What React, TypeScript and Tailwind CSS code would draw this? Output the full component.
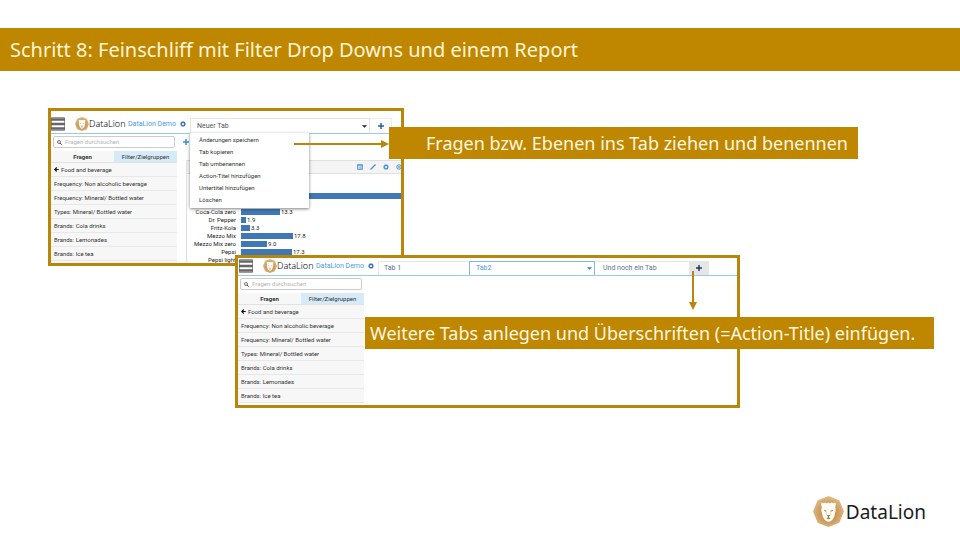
import React from "react";

const slideFont = "font-['Noto_Sans','Open_Sans',sans-serif]";
const appFont = "font-[Roboto,Arial,sans-serif]";

function LionMark({ className, id }: { className: string; id: string }) {
  return (
    <svg viewBox="0 0 30 30" className={className} aria-hidden="true">
      <defs>
        <radialGradient id={id} cx="0.5" cy="0.55" r="0.55">
          <stop offset="0" stopColor="#b9853f" />
          <stop offset="0.6" stopColor="#cfa063" />
          <stop offset="1" stopColor="#e3bd8a" />
        </radialGradient>
      </defs>
      <path d="M15 0 L25.500 4 L30 15 L25.500 26 L15 30 L4.500 26 L0 15 L4.500 4 Z" fill={`url(#${id})`} />
      <path
        d="M8 8.500 C7.300 6.800 9 5.800 10.400 7 L12 6.400 L13.500 7.200 L15 6.400 L16.500 7.200 L18 6.400 L19.600 7 C21 5.800 22.700 6.800 22 8.500 L21.500 11 L22 14 L21.200 17 L20.500 20 L18.800 23 L17 24.500 L15 25 L13 24.500 L11.200 23 L9.500 20 L8.800 17 L8 14 L8.500 11 Z"
        fill="#fffdf8"
      />
      <path d="M10.500 13.200 L13.200 14.300 L12.800 15.200 L11 14.600 Z M19.500 13.200 L16.800 14.300 L17.200 15.200 L19 14.600 Z" fill="#a87c42" />
      <path d="M13.200 18.500 H16.800 L15.300 20.300 L17 22 L15 22.600 L13 22 L14.700 20.300 Z" fill="#a87c42" />
      <path d="M13 15.500 L12.600 18.500 M17 15.500 L17.400 18.500" stroke="#e0c193" strokeWidth="0.600" fill="none" />
    </svg>
  );
}

function Gear({ className }: { className: string }) {
  return (
    <svg viewBox="0 0 16 16" className={className} aria-hidden="true">
      <circle cx="8" cy="8" r="4.500" fill="none" stroke="currentColor" strokeWidth="3" />
      <path
        d="M8 0.500 V3 M8 13 V15.500 M0.500 8 H3 M13 8 H15.500 M2.700 2.700 L4.400 4.400 M11.600 11.600 L13.300 13.300 M2.700 13.300 L4.400 11.600 M11.600 4.400 L13.300 2.700"
        stroke="currentColor"
        strokeWidth="3"
      />
    </svg>
  );
}

function Plus({ className }: { className: string }) {
  return (
    <svg viewBox="0 0 6 6" className={className} aria-hidden="true">
      <path d="M3 0 V6 M0 3 H6" stroke="currentColor" strokeWidth="1.500" />
    </svg>
  );
}

function Caret({ className }: { className: string }) {
  return (
    <svg viewBox="0 0 6 3" className={className} aria-hidden="true">
      <path d="M0 0 H6 L3 3 Z" fill="currentColor" />
    </svg>
  );
}

function AppBrand({ id }: { id: string }) {
  return (
    <div className="flex w-[139px] shrink-0 items-center pb-[2px]">
      <button aria-label="Menü" className="h-[14px] w-[14px] text-[#666]">
        <svg viewBox="0 0 14 14" className="h-[14px] w-[14px]" aria-hidden="true">
          <path d="M0.500 0.500 H13.500 V13.500 H0.500 Z" fill="#fff" stroke="#999" />
          <path d="M0 2.500 H14 M0 7 H14 M0 11.500 H14" stroke="currentColor" strokeWidth="2.600" />
        </svg>
      </button>
      <LionMark id={id} className="ml-[10px] h-[14px] w-[14px]" />
      <span className={`${slideFont} w-[39px] text-[9px] font-light leading-[14px] text-black`}>DataLion</span>
      <a href="#demo" className={`${appFont} whitespace-nowrap text-[7px] leading-[14px] text-[#4a9be0]`}>
        DataLion Demo
      </a>
      <button aria-label="Einstellungen" className="ml-auto mr-[4px] text-[#2f6fb5]">
        <Gear className="h-[6px] w-[6px]" />
      </button>
    </div>
  );
}

const questions = [
  "Frequency: Non alcoholic beverage",
  "Frequency: Mineral/ Bottled water",
  "Types: Mineral/ Bottled water",
  "Brands: Cola drinks",
  "Brands: Lemonades",
  "Brands: Ice tea",
];

function Sidebar() {
  return (
    <aside className={`${appFont} w-[126px] shrink-0 bg-[#f7f7f7] text-[6px] text-[#333]`}>
      <div className="bg-white px-[2px] pb-[3px] pt-[2px]">
        <label className="flex h-[12px] items-center gap-[3px] rounded-[2px] border border-[#ccc] bg-white px-[3px]">
          <svg viewBox="0 0 10 10" className="h-[5px] w-[5px] shrink-0" aria-hidden="true">
            <circle cx="4" cy="4" r="3" fill="none" stroke="#444" strokeWidth="1.500" />
            <path d="M6 6 L9.500 9.500" stroke="#444" strokeWidth="1.800" />
          </svg>
          <input
            type="search"
            aria-label="Fragen durchsuchen"
            placeholder="Fragen durchsuchen"
            className="min-w-0 flex-1 bg-transparent text-[6px] leading-[10px] outline-none placeholder:text-[#b5b5b5]"
          />
        </label>
      </div>
      <div role="tablist" className="grid h-[12px] grid-cols-2 border-b border-[#e2e2e2]">
        <button role="tab" className="font-bold leading-[11px]">Fragen</button>
        <button role="tab" className="bg-[#d6eaf8] leading-[11px]">Filter/Zielgruppen</button>
      </div>
      <ul>
        <li className="flex h-[14px] items-center gap-[2px] border-b border-[#e8e8e8] px-[3px]">
          <svg viewBox="0 0 10 10" className="h-[5px] w-[5px]" aria-hidden="true">
            <path d="M9.500 5 H2 M5.500 1 L1.500 5 L5.500 9" fill="none" stroke="#111" strokeWidth="2.200" />
          </svg>
          Food and beverage
        </li>
        {questions.map((q) => (
          <li key={q} className="flex h-[14px] items-center whitespace-nowrap border-b border-[#e8e8e8] px-[3px]">
            {q}
          </li>
        ))}
      </ul>
    </aside>
  );
}

const menuItems = [
  "Änderungen speichern",
  "Tab kopieren",
  "Tab umbenennen",
  "Action-Titel hinzufügen",
  "Untertitel hinzufügen",
  "Löschen",
];

const bars = [
  { label: "Coca-Cola zero", value: "13.3", width: 39 },
  { label: "Dr. Pepper", value: "1.9", width: 5 },
  { label: "Fritz-Kola", value: "3.3", width: 9 },
  { label: "Mezzo Mix", value: "17.8", width: 52 },
  { label: "Mezzo Mix zero", value: "9.0", width: 26 },
  { label: "Pepsi", value: "17.3", width: 51 },
  { label: "Pepsi light", value: "", width: 20 },
];

function ChartPanel() {
  return (
    <section className={`${appFont} ml-[9px] mt-[26px] min-w-0 flex-1 border-l border-[#e0e0e0] text-[6px] text-[#222]`}>
      <div className="flex h-[14px] items-center justify-end gap-[7px] overflow-hidden border-y border-[#e0e0e0] bg-[#f4f4f4] text-[#4292d8]">
        <svg viewBox="0 0 12 12" className="h-[6px] w-[6px] shrink-0" aria-hidden="true">
          <path d="M1 1 H11 V11 H1 Z M1 3 H11 M4 5 V11 M6 6 H10 M6 8.500 H10" fill="none" stroke="currentColor" strokeWidth="1.500" />
        </svg>
        <svg viewBox="0 0 12 12" className="h-[6px] w-[6px] shrink-0" aria-hidden="true">
          <path d="M1 11 L11 1" stroke="currentColor" strokeWidth="2.600" />
        </svg>
        <Gear className="h-[6px] w-[6px] shrink-0" />
        <svg viewBox="0 0 10 12" className="h-[6px] w-[5px] shrink-0" aria-hidden="true">
          <circle cx="6" cy="6" r="4.500" fill="none" stroke="currentColor" strokeWidth="1.800" />
          <path d="M3.500 6 H8.500 M6 3.500 V8.500" stroke="currentColor" strokeWidth="1.400" />
        </svg>
      </div>
      <div className="pt-[18px]">
        <div className="ml-[54px] flex h-[16px] items-start pt-[1px]">
          <span className="h-[6px] w-full bg-[#3f78b5]" />
        </div>
        {bars.map((b) => (
          <div key={b.label} className="flex h-[8px] items-center">
            <span className="w-[49px] shrink-0 whitespace-nowrap text-right leading-[8px]">{b.label}</span>
            <span className="ml-[5px] h-[6px] shrink-0 bg-[#3f78b5]" style={{ width: b.width }} />
            <span className="ml-[1px] leading-[8px]">{b.value}</span>
          </div>
        ))}
      </div>
    </section>
  );
}

function EditTabWindow() {
  return (
    <div className="absolute left-[48px] top-[37px] h-[158px] w-[356px] overflow-hidden border-[3px] border-[#b8860b] bg-white">
      <header className="flex h-[23px] items-end border-b border-[#9cc8ea]">
        <AppBrand id="lion-edit" />
        <button
          aria-haspopup="menu"
          aria-expanded="true"
          className={`${appFont} flex h-[15px] w-[180px] items-center justify-between border border-b-0 border-[#e4e4e4] pl-[6px] pr-[2px] text-[7px] text-[#555]`}
        >
          Neuer Tab
          <Caret className="h-[3px] w-[5px] text-[#222]" />
        </button>
        <button aria-label="Tab hinzufügen" className="flex h-[15px] w-[22px] items-center justify-center border-r border-t border-[#eee] text-[#2b5fa8]">
          <Plus className="h-[6px] w-[6px]" />
        </button>
      </header>
      <div className="flex">
        <Sidebar />
        <ChartPanel />
      </div>
      <button aria-label="Element hinzufügen" className="absolute left-[132px] top-[28px] text-[#3390dc]">
        <Plus className="h-[6px] w-[6px]" />
      </button>
      <ul
        role="menu"
        className={`${appFont} absolute left-[139px] top-[22px] w-[119px] bg-white pb-[2px] pt-[1px] text-[6px] text-[#333] shadow-[0_1px_3px_rgba(0,0,0,0.5)]`}
      >
        {menuItems.map((item) => (
          <li key={item} role="none">
            <button role="menuitem" className="block h-[12px] w-full px-[9px] text-left leading-[12px]">
              {item}
            </button>
          </li>
        ))}
      </ul>
    </div>
  );
}

function TabsWindow() {
  return (
    <div className="absolute left-[235px] top-[184px] h-[153px] w-[505px] overflow-hidden border-[3px] border-[#b8860b] bg-white">
      <header className={`${appFont} flex h-[18px] items-end border-b border-[#9cc8ea] pl-[1px] text-[7px] text-[#56729c]`}>
        <AppBrand id="lion-tabs" />
        <button className="h-[14px] w-[91px] border-l border-t border-[#e8e8e8] pl-[5px] text-left">Tab 1</button>
        <button
          aria-haspopup="menu"
          className="flex h-[14px] w-[126px] items-center justify-between border border-b-0 border-[#7fb9e6] pl-[6px] pr-[2px] text-[#4a9be0]"
        >
          Tab2
          <Caret className="h-[3px] w-[5px] text-[#2f7fc8]" />
        </button>
        <button className="h-[14px] w-[94px] border-t border-[#e8e8e8] pl-[8px] text-left">Und noch ein Tab</button>
        <button aria-label="Tab hinzufügen" className="flex h-[14px] w-[20px] items-center justify-center bg-[#e6e6e6] text-[#1f3a66]">
          <Plus className="h-[6px] w-[6px]" />
        </button>
      </header>
      <Sidebar />
    </div>
  );
}

export default function App() {
  return (
    <div className={`${slideFont} flex min-h-screen flex-col bg-white pt-[28px]`}>
      <h1 className="flex h-[43px] items-center bg-[#bf8600] px-[10px] text-[20px] leading-[28px] text-[#fff6d8]">
        Schritt 8: Feinschliff mit Filter Drop Downs und einem Report
      </h1>

      <main className="relative min-h-[340px] flex-1">
        <EditTabWindow />
        <TabsWindow />
        <p className="absolute left-[389px] top-[56px] flex h-[32px] w-[469px] items-center justify-end whitespace-nowrap bg-[#bf8600] pr-[10px] text-[18px] text-[#fff8e0]">
          Fragen bzw. Ebenen ins Tab ziehen und benennen
        </p>
        <p className="absolute left-[365px] top-[246px] flex h-[32px] w-[569px] items-center whitespace-nowrap bg-[#bf8600] pl-[5px] text-[18px] text-[#fff8e0]">
          Weitere Tabs anlegen und Überschriften (=Action-Title) einfügen.
        </p>
        <svg viewBox="0 0 95 8" className="absolute left-[294px] top-[69px] h-[8px] w-[95px]" aria-hidden="true">
          <path d="M0 4 H88" stroke="#b8860b" strokeWidth="2" />
          <path d="M87 0 L95 4 L87 8 Z" fill="#b8860b" />
        </svg>
        <svg viewBox="0 0 8 39" className="absolute left-[689px] top-[200px] h-[39px] w-[8px]" aria-hidden="true">
          <path d="M4 0 V32" stroke="#b8860b" strokeWidth="2" />
          <path d="M0 31 H8 L4 39 Z" fill="#b8860b" />
        </svg>
      </main>

      <footer className="flex items-center justify-end gap-[2px] pb-[13px] pr-[34px]">
        <LionMark id="lion-footer" className="h-[31px] w-[31px]" />
        <span className="text-[19px] leading-[28px] text-[#1c1c1c]">DataLion</span>
      </footer>
    </div>
  );
}
